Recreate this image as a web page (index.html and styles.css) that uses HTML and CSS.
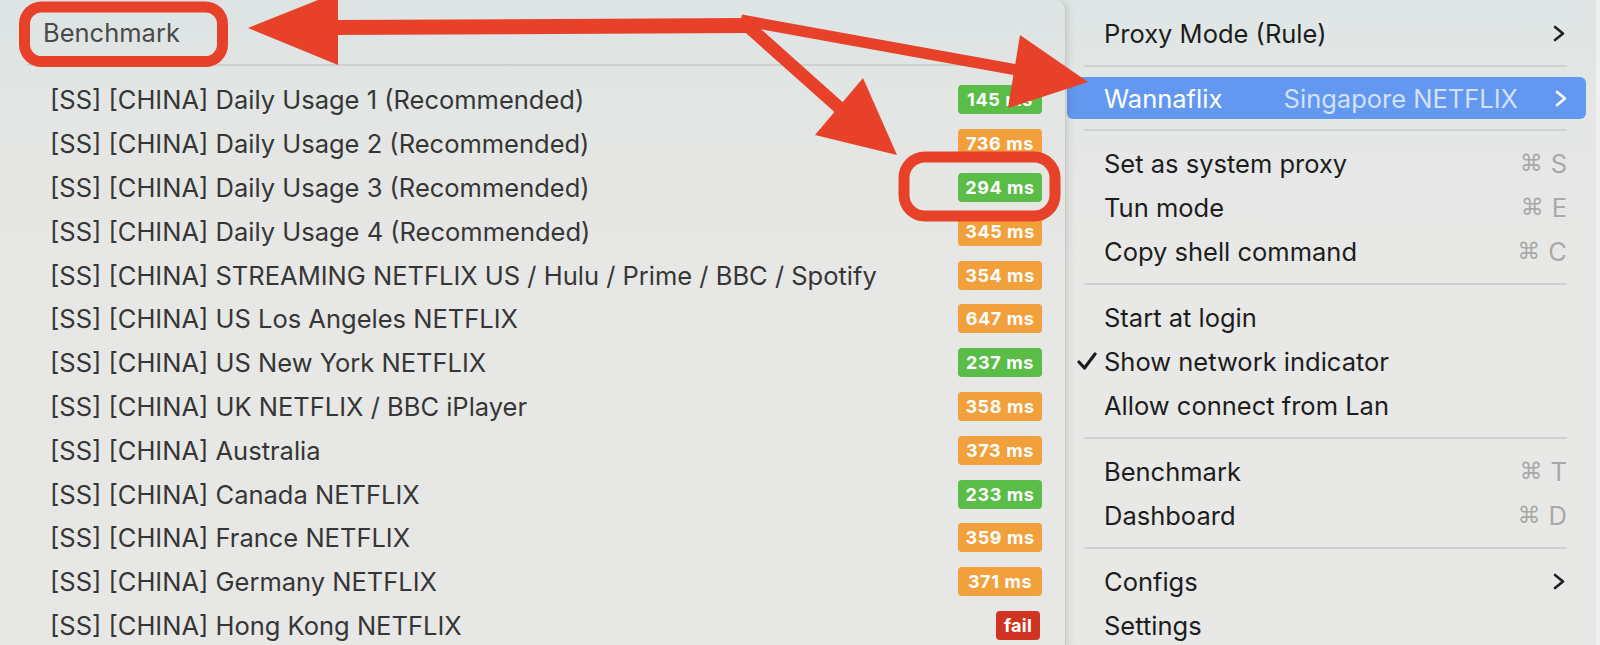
FILE: index.html
```html
<!DOCTYPE html>
<html lang="en">
<head>
<meta charset="utf-8">
<title>Benchmark menu</title>
<link rel="stylesheet" href="styles.css">
</head>
<body>
<div class="stage">
  <section class="bench">
    <header class="bench-head">Benchmark</header>
    <div class="bench-sep"></div>
    <ul class="bench-list">
      <li class="bench-row"><span class="name">[SS] [CHINA] Daily Usage 1 (Recommended)</span><span class="badge ok">145 ms</span></li>
      <li class="bench-row"><span class="name">[SS] [CHINA] Daily Usage 2 (Recommended)</span><span class="badge slow">736 ms</span></li>
      <li class="bench-row"><span class="name">[SS] [CHINA] Daily Usage 3 (Recommended)</span><span class="badge ok">294 ms</span></li>
      <li class="bench-row"><span class="name">[SS] [CHINA] Daily Usage 4 (Recommended)</span><span class="badge slow">345 ms</span></li>
      <li class="bench-row"><span class="name">[SS] [CHINA] STREAMING NETFLIX US / Hulu / Prime / BBC / Spotify</span><span class="badge slow">354 ms</span></li>
      <li class="bench-row"><span class="name">[SS] [CHINA] US Los Angeles NETFLIX</span><span class="badge slow">647 ms</span></li>
      <li class="bench-row"><span class="name">[SS] [CHINA] US New York NETFLIX</span><span class="badge ok">237 ms</span></li>
      <li class="bench-row"><span class="name">[SS] [CHINA] UK NETFLIX / BBC iPlayer</span><span class="badge slow">358 ms</span></li>
      <li class="bench-row"><span class="name">[SS] [CHINA] Australia</span><span class="badge slow">373 ms</span></li>
      <li class="bench-row"><span class="name">[SS] [CHINA] Canada NETFLIX</span><span class="badge ok">233 ms</span></li>
      <li class="bench-row"><span class="name">[SS] [CHINA] France NETFLIX</span><span class="badge slow">359 ms</span></li>
      <li class="bench-row"><span class="name">[SS] [CHINA] Germany NETFLIX</span><span class="badge slow">371 ms</span></li>
      <li class="bench-row"><span class="name">[SS] [CHINA] Hong Kong NETFLIX</span><span class="badge fail">fail</span></li>
    </ul>
  </section>

  <nav class="menu">
    <div class="item"><span class="gutter"></span><span class="label">Proxy Mode (Rule)</span>
      <svg class="chev" width="12" height="17" viewBox="0 0 12 17"><polyline points="2,2 10,8.5 2,15" fill="none" stroke="#222" stroke-width="2.6" stroke-linecap="round" stroke-linejoin="round"/></svg></div>
    <div class="sep"></div>
    <div class="item hl"><span class="gutter hl-gutter"></span><span class="label">Wannaflix</span><span class="value">Singapore NETFLIX</span>
      <svg class="chev" width="12" height="17" viewBox="0 0 12 17"><polyline points="2,2 10,8.5 2,15" fill="none" stroke="#fff" stroke-width="2.6" stroke-linecap="round" stroke-linejoin="round"/></svg></div>
    <div class="sep"></div>
    <div class="item"><span class="gutter"></span><span class="label">Set as system proxy</span><span class="kbd"><span class="cmd">⌘</span><span>S</span></span></div>
    <div class="item"><span class="gutter"></span><span class="label">Tun mode</span><span class="kbd"><span class="cmd">⌘</span><span>E</span></span></div>
    <div class="item"><span class="gutter"></span><span class="label">Copy shell command</span><span class="kbd"><span class="cmd">⌘</span><span>C</span></span></div>
    <div class="sep"></div>
    <div class="item"><span class="gutter"></span><span class="label">Start at login</span></div>
    <div class="item"><span class="gutter"><svg class="check" width="20" height="18" viewBox="0 0 20 18"><polyline points="2,10 7.5,16 18,2" fill="none" stroke="#1d1d1d" stroke-width="3.2" stroke-linecap="round" stroke-linejoin="round"/></svg></span><span class="label">Show network indicator</span></div>
    <div class="item"><span class="gutter"></span><span class="label">Allow connect from Lan</span></div>
    <div class="sep"></div>
    <div class="item"><span class="gutter"></span><span class="label">Benchmark</span><span class="kbd"><span class="cmd">⌘</span><span>T</span></span></div>
    <div class="item"><span class="gutter"></span><span class="label">Dashboard</span><span class="kbd"><span class="cmd">⌘</span><span>D</span></span></div>
    <div class="sep"></div>
    <div class="item"><span class="gutter"></span><span class="label">Configs</span>
      <svg class="chev" width="12" height="17" viewBox="0 0 12 17"><polyline points="2,2 10,8.5 2,15" fill="none" stroke="#222" stroke-width="2.6" stroke-linecap="round" stroke-linejoin="round"/></svg></div>
    <div class="item"><span class="gutter"></span><span class="label">Settings</span></div>
  </nav>

  <div class="backdrop" aria-hidden="true"></div>

  <svg class="annot" width="1600" height="645" viewBox="0 0 1600 645">
    <g fill="none" stroke="#e8412a" stroke-width="11">
      <rect x="24.5" y="7" width="198" height="54.5" rx="17"/>
      <rect x="904" y="157" width="151" height="59" rx="21"/>
    </g>
    <g stroke="#e8412a">
      <line x1="330" y1="27.5" x2="746" y2="25.5" stroke-width="15"/>
      <line x1="741" y1="20" x2="1017" y2="70" stroke-width="11"/>
      <line x1="741" y1="20" x2="843" y2="111" stroke-width="13"/>
    </g>
    <g fill="#e8412a">
      <polygon points="248,28 338,-8 338,65"/>
      <polygon points="1020,35 1088,82 1008,108"/>
      <polygon points="863,78 897,155 815,135"/>
    </g>
  </svg>
</div>
</body>
</html>
```

FILE: styles.css
```css
* { box-sizing: border-box; margin: 0; padding: 0; }

html, body {
  width: 1600px;
  height: 645px;
  overflow: hidden;
}

body {
  font-family: Inter, "Noto Sans", "DejaVu Sans", sans-serif;
  background: #ececec;
}

.stage {
  position: relative;
  display: grid;
  grid-template-columns: 1066px 530px 4px;
  height: 645px;
  background: #dfe5e5;
}

/* ---------- Benchmark submenu ---------- */
.bench {
  position: relative;
  z-index: 1;
  background: linear-gradient(#dde4e4 0, #e4e6e4 140px, #e7e7e5 260px);
  border-radius: 10px 10px 0 0;
  border-right: 1px solid #c8c9c9;
  box-shadow: 3px 0 6px rgba(0, 0, 0, 0.10);
  overflow: hidden;
}

.bench-head {
  height: 64px;
  display: flex;
  align-items: center;
  padding-left: 43px;
  font-size: 25.5px;
  color: #4a4a4a;
}

.bench-sep {
  height: 2px;
  margin-left: 27px;
  background: #cfd1d1;
}

.bench-list {
  list-style: none;
  padding: 12px 23px 0 50px;
}

.bench-row {
  height: 43.8px;
  display: flex;
  align-items: center;
  justify-content: space-between;
  font-size: 25.5px;
  color: #363636;
  white-space: nowrap;
}

.badge {
  flex: none;
  width: 84px;
  height: 29px;
  border-radius: 4px;
  display: flex;
  align-items: center;
  justify-content: center;
  color: #fff;
  font-weight: 700;
  font-size: 18px;
  letter-spacing: 0.6px;
}

.badge.ok { background: #59bd47; }
.badge.slow { background: #f2a03c; }
.badge.fail {
  width: 44px;
  margin-right: 2px;
  letter-spacing: 0.3px;
  background: #cf3522;
}

/* ---------- Main status menu ---------- */
.menu {
  background: linear-gradient(#dfe5e5 0, #e5e7e6 140px, #e8e8e6 260px);
  border-radius: 0 10px 0 0;
  padding-top: 11px;
  font-size: 25.5px;
  color: #1d1d1d;
  white-space: nowrap;
}

.item {
  height: 44px;
  display: flex;
  align-items: center;
  padding-right: 29px;
}

.gutter {
  flex: none;
  width: 38px;
  display: flex;
  align-items: center;
}

.check { margin-left: 11px; }

.chev {
  flex: none;
  margin-left: auto;
  margin-right: 2px;
}

.kbd {
  margin-left: auto;
  display: flex;
  align-items: center;
  gap: 8px;
  color: #a9a9a9;
}

.cmd {
  font-family: "DejaVu Sans", sans-serif;
  font-size: 23px;
}

.item.hl {
  height: 42px;
  margin: 1px 10px 1px 1px;
  padding-right: 19px;
  background: #6398f0;
  border-radius: 6px;
  color: #fff;
}

.hl-gutter { width: 37px; }

.value {
  margin-left: auto;
  margin-right: 37px;
  color: rgba(255, 255, 255, 0.72);
}

.item.hl .chev { margin-left: 0; margin-right: 0; }

.sep {
  height: 2px;
  margin: 10px 29px 10px 18px;
  background: #d0d1d1;
}

/* ---------- Window peeking behind ---------- */
.backdrop {
  background: #efefef;
}

/* ---------- Red annotations ---------- */
.annot {
  position: absolute;
  left: 0;
  top: 0;
  z-index: 5;
  pointer-events: none;
}
```
